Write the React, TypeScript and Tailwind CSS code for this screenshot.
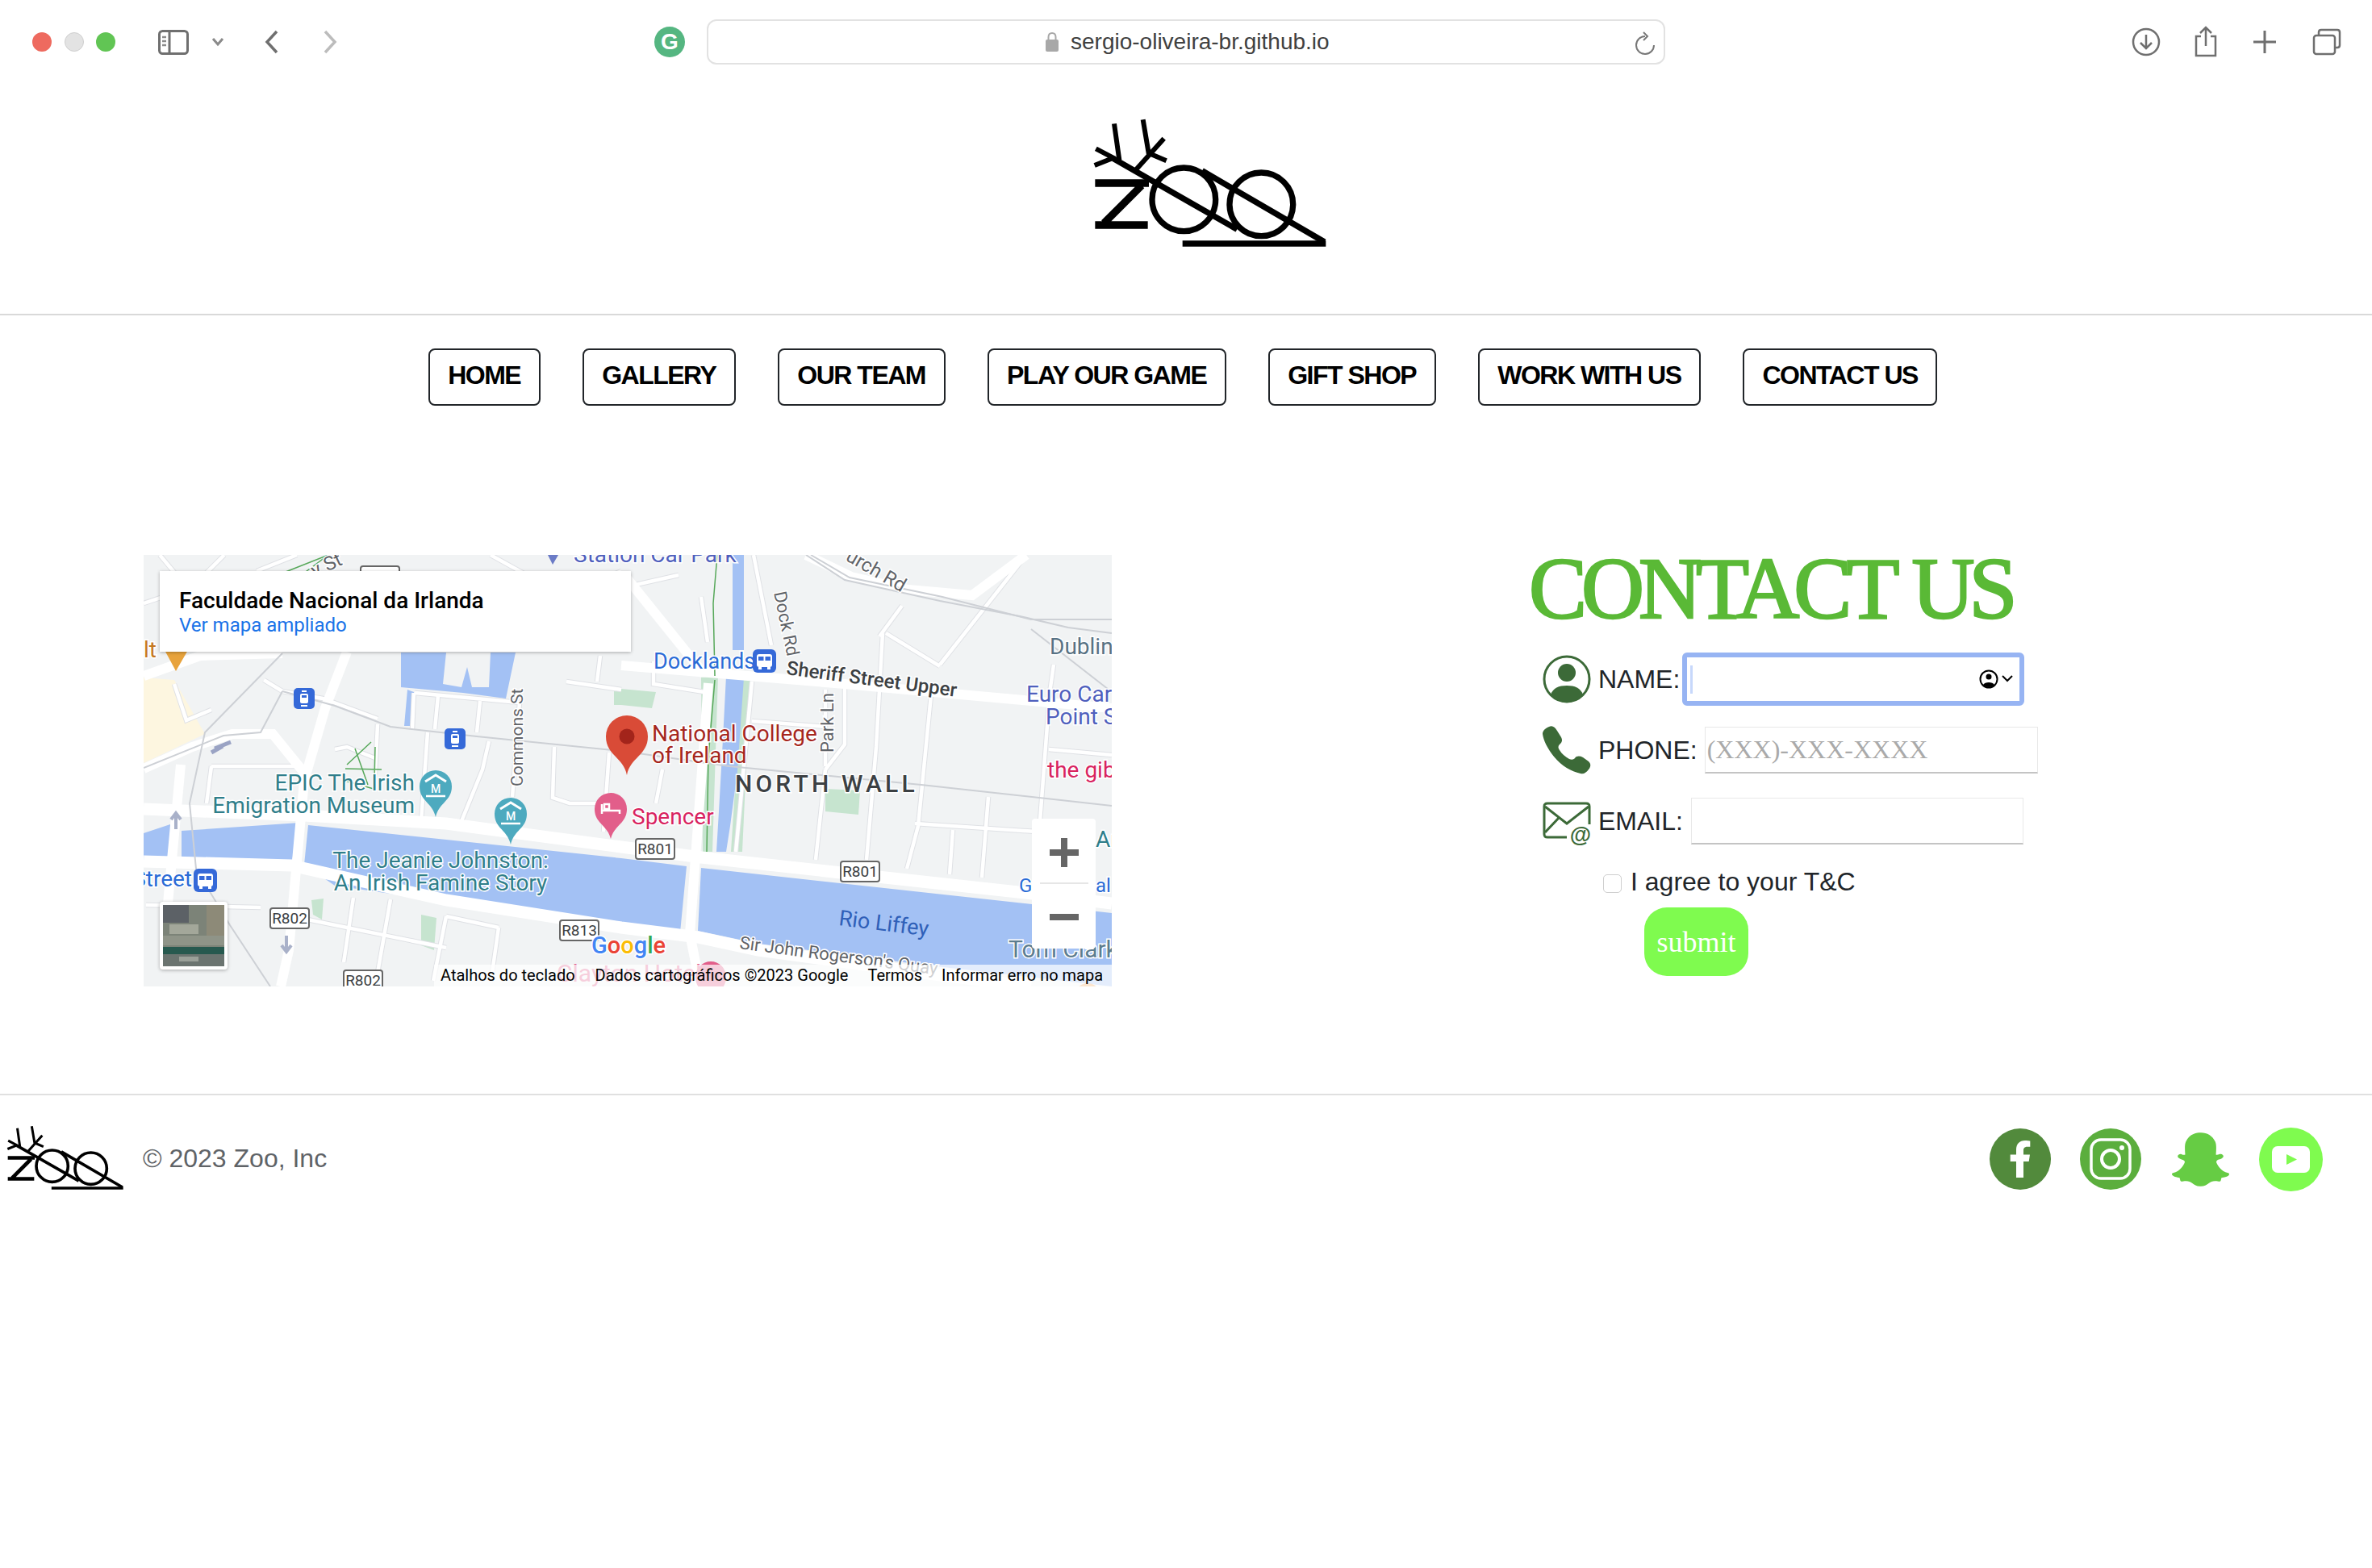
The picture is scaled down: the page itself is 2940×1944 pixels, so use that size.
import { FaFacebookF, FaSnapchatGhost } from 'react-icons/fa'

const NAV = ['HOME', 'GALLERY', 'OUR TEAM', 'PLAY OUR GAME', 'GIFT SHOP', 'WORK WITH US', 'CONTACT US']

// map geometry, in pixels of the 1200x535 map
const WATER = [
  '0,345 33,334 33,378 0,378',
  '47,342 193,332 183,384 47,378',
  '204,335 592,376 673,386 665,468 592,460 375,430 237,410 199,384',
  '691,388 1200,444 1200,535 965,508 762,482 687,466',
  '319,121 375,121 371,160 394,164 401,139 407,164 428,164 430,121 461,121 449,178 396,171 319,164',
  '327,167 335,170 331,212 323,212',
  '730,0 744,0 744,118 730,118',
  '722,150 744,152 736,268 727,336 722,368 710,368 713,318 718,228',
]

const GREEN = [
  '691,152 712,150 705,368 693,368',
  '742,152 752,154 742,368 728,368',
  '592,166 635,170 630,190 592,186',
  '845,290 888,292 886,322 845,318',
  '208,428 223,426 221,452 210,446',
  '344,446 363,450 360,490 344,484',
  '583,168 592,168 592,186 583,186',
]

const MAJOR: number[][][] = [
  [[0, 315], [199, 323], [375, 333], [592, 362], [691, 375], [1102, 420], [1200, 432]],
  [[0, 380], [183, 385], [375, 428], [592, 462], [687, 474], [762, 490], [965, 518], [1100, 535]],
  [[46, 260], [30, 432]],
  [[252, 120], [225, 190], [199, 280], [180, 490], [170, 535]],
  [[700, 159], [677, 470], [690, 535]],
  [[600, 30], [695, 148]],
  [[592, 137], [869, 160], [1200, 190]],
  [[0, 265], [60, 238], [110, 222], [160, 222], [199, 270]],
  [[0, 150], [70, 125], [172, 122]],
  [[821, 0], [877, 27], [948, 43], [1027, 50], [1094, 0]],
]

const MINOR: number[][][] = [
  [[38, 160], [53, 205], [84, 192]],
  [[149, 155], [172, 169], [222, 178], [290, 203]],
  [[336, 171], [466, 183]],
  [[335, 171], [333, 216]],
  [[365, 174], [361, 216]],
  [[417, 181], [413, 220]],
  [[466, 183], [457, 300]],
  [[352, 220], [344, 330]],
  [[428, 231], [420, 266], [394, 330]],
  [[290, 210], [287, 272]],
  [[237, 241], [252, 238], [287, 252]],
  [[84, 262], [187, 262]],
  [[84, 262], [78, 308]],
  [[524, 157], [592, 167]],
  [[566, 125], [562, 157]],
  [[509, 238], [507, 301], [528, 308], [566, 308]],
  [[577, 245], [570, 343]],
  [[260, 425], [248, 505]],
  [[306, 427], [290, 518]],
  [[375, 448], [359, 528]],
  [[440, 462], [432, 518]],
  [[203, 452], [375, 487]],
  [[375, 448], [440, 462]],
  [[3, 434], [145, 437]],
  [[916, 97], [908, 238], [896, 378]],
  [[920, 97], [987, 138]],
  [[987, 136], [1094, 0]],
  [[976, 174], [960, 336], [946, 389]],
  [[845, 266], [833, 378]],
  [[845, 167], [845, 262]],
  [[869, 160], [869, 235], [845, 266]],
  [[754, 157], [734, 368]],
  [[754, 206], [845, 213]],
  [[956, 333], [1106, 343]],
  [[1047, 300], [1039, 400]],
  [[1003, 341], [999, 396]],
  [[1122, 185], [1110, 343]],
  [[1122, 241], [1200, 248]],
  [[1128, 136], [1122, 178]],
  [[632, 132], [632, 160], [695, 170]],
  [[643, 266], [635, 308]],
  [[756, 0], [778, 112]],
  [[940, 63], [912, 101]],
  [[592, 41], [663, 25]],
  [[691, 52], [699, 108]],
  [[0, 60], [60, 40], [100, 0]],
  [[20, 0], [70, 60]],
  [[140, 20], [190, 0]],
  [[430, 0], [520, 50], [592, 20]],
]

const RAILS: number[][][] = [
  [[0, 264], [99, 224], [145, 220], [172, 169]],
  [[172, 169], [237, 187], [306, 213], [413, 225], [592, 243], [726, 262], [964, 285], [1200, 311]],
  [[172, 122], [76, 220], [57, 308], [65, 389], [107, 459], [157, 535]],
  [[821, 0], [869, 31], [987, 57], [1086, 76], [1146, 90], [1200, 97]],
  [[827, 0], [875, 28], [990, 52], [1100, 80], [1200, 80]],
  [[1100, 92], [1200, 170]],
]

const pts = (line: number[][]) => line.map(p => p.join(',')).join(' ')

function Logo({ className }: { className: string }) {
  return (
    <svg className={className} viewBox="0 0 1080 570" fill="none" stroke="#000">
      <g strokeWidth="18">
        <path d="M243 70 262 205M350 55 372 185M428 125 325 240M175 163 245 200M170 225 240 197M372 180 437 208" />
      </g>
      <g strokeWidth="28">
        <path d="M172 291H372M345 300 205 440M172 447H368" />
      </g>
      <g strokeWidth="22">
        <path d="M240 200 700 463M570 245 1025 510" />
        <circle cx="502" cy="352" r="118" />
        <circle cx="790" cy="370" r="118" />
        <path d="M497 516H1030" />
      </g>
    </svg>
  )
}

function Label({ x, y, size = 28, color, anchor, rotate, weight = 400, spacing, children }: any) {
  return (
    <text
      x={x}
      y={y}
      fontSize={size}
      fontWeight={weight}
      fill={color}
      textAnchor={anchor}
      letterSpacing={spacing}
      stroke="#fff"
      strokeWidth="3"
      paintOrder="stroke"
      transform={rotate ? `rotate(${rotate} ${x} ${y})` : undefined}
    >
      {children}
    </text>
  )
}

function Pin({ cx, top, w, h, color }: any) {
  const r = w / 2
  const cy = top + r
  return (
    <path
      fill={color}
      d={`M${cx - r} ${cy}A${r} ${r} 0 1 1 ${cx + r} ${cy}C${cx + r} ${cy + r * 0.9} ${cx + 4} ${cy + r} ${cx} ${top + h}C${cx - 4} ${cy + r} ${cx - r} ${cy + r * 0.9} ${cx - r} ${cy}Z`}
    />
  )
}

function Museum({ cx, top }: any) {
  return (
    <g>
      <Pin cx={cx} top={top} w={40} h={58} color="#4daabf" />
      <path d={`M${cx - 13} ${top + 14}L${cx} ${top + 6}L${cx + 13} ${top + 14}`} fill="none" stroke="#fff" strokeWidth="3" />
      <text x={cx} y={top + 28} fontSize="14" fontWeight="500" fill="#fff" textAnchor="middle">M</text>
      <path d={`M${cx - 12} ${top + 32}H${cx + 12}`} stroke="#fff" strokeWidth="2.5" />
    </g>
  )
}

function Tram({ x, y }: any) {
  return (
    <g>
      <rect x={x} y={y} width="26" height="26" rx="5" fill="#3569d8" />
      <rect x={x + 8} y={y + 7} width="10" height="12" rx="2" fill="#fff" />
      <rect x={x + 10} y={y + 9} width="6" height="3" fill="#3569d8" />
      <path d={`M${x + 10} ${y + 4}H${x + 16}M${x + 9} ${y + 22}H${x + 17}`} stroke="#fff" strokeWidth="2" />
    </g>
  )
}

function Bus({ x, y }: any) {
  return (
    <g>
      <rect x={x} y={y} width="29" height="29" rx="6" fill="#3569d8" />
      <rect x={x + 5} y={y + 6} width="19" height="16" rx="3" fill="#fff" />
      <rect x={x + 7} y={y + 9} width="6.5" height="5" fill="#3569d8" />
      <rect x={x + 15.5} y={y + 9} width="6.5" height="5" fill="#3569d8" />
      <rect x={x + 7} y={y + 22} width="4" height="3" fill="#fff" />
      <rect x={x + 18} y={y + 22} width="4" height="3" fill="#fff" />
    </g>
  )
}

function Shield({ x, y, w = 48, h = 25, children }: any) {
  return (
    <g>
      <rect x={x} y={y} width={w} height={h} rx="3" fill="#fff" stroke="#666" strokeWidth="2" />
      <text x={x + w / 2} y={y + h - 6} fontSize="19" fill="#3c4043" textAnchor="middle">{children}</text>
    </g>
  )
}

function MapCanvas() {
  return (
    <svg className="block w-[1200px] h-[535px] font-['Roboto',sans-serif]" viewBox="0 0 1200 535">
      <rect width="1200" height="535" fill="#f1f3f4" />
      <polygon points="0,152 38,155 76,222 0,258" fill="#fdf6e0" />
      {GREEN.map(p => <polygon key={p} points={p} fill="#c6e4cf" />)}
      {WATER.map(p => <polygon key={p} points={p} fill="#a3c1f4" />)}
      {MINOR.map((l, i) => <polyline key={i} points={pts(l)} fill="none" stroke="#dfe1e5" strokeWidth="6.5" />)}
      {MINOR.map((l, i) => <polyline key={i} points={pts(l)} fill="none" stroke="#fff" strokeWidth="4.5" />)}
      {MAJOR.map((l, i) => <polyline key={i} points={pts(l)} fill="none" stroke="#fff" strokeWidth={i < 2 ? 15 : 12} />)}
      {RAILS.map((l, i) => <polyline key={i} points={pts(l)} fill="none" stroke="#cdd0d5" strokeWidth="2" />)}
      <path d="M229 0 171 23 190 29Z" fill="none" stroke="#57a85a" strokeWidth="1.5" />
      <path d="M711 0 706 60 708 150M708 155 700 250 698 368M252 260 282 232M250 265 295 266M262 240 278 285M287 238 286 282M250 280 285 290" fill="none" stroke="#57a85a" strokeWidth="1.5" />

      <path d="M501 0H514L507 12Z" fill="#6b7bc6" />
      <Label x={533} y={9} size={28} color="#4f5fbd">Station Car Park</Label>
      <Label x={212} y={28} size={24} color="#5f6368" rotate={-25}>y St</Label>
      <Label x={869} y={6} size={24} color="#5f6368" rotate={30}>urch Rd</Label>
      <Shield x={269} y={14}>R1</Shield>

      <Label x={0} y={127} color="#c5781f">lt</Label>
      <path d="M26 118H55L40 144Z" fill="#e8a33c" />
      <Tram x={186} y={165} />
      <Tram x={373} y={215} />
      <path d="M88 240 108 232M84 245 98 237" stroke="#9aa3c4" strokeWidth="5" />
      <path d="M40 340V322M34 328 40 320 46 328" fill="none" stroke="#a9b1c9" strokeWidth="4" />
      <path d="M177 490V472M171 484 177 492 183 484" fill="none" stroke="#a9b1c9" strokeWidth="4" />

      <Label x={336} y={292} color="#2f7e8a" anchor="end">EPIC The Irish</Label>
      <Label x={336} y={320} color="#2f7e8a" anchor="end">Emigration Museum</Label>
      <Museum cx={362} top={267} />
      <Museum cx={455} top={301} />
      <Label x={470} y={287} size={21} color="#5f6368" rotate={-90}>Commons St</Label>
      <Label x={368} y={388} color="#2f7e8a" anchor="middle">The Jeanie Johnston:</Label>
      <Label x={368} y={416} color="#2f7e8a" anchor="middle">An Irish Famine Story</Label>
      <Label x={60} y={411} color="#2a6bd6" anchor="end">Street</Label>
      <Bus x={62} y={389} />
      <Shield x={157} y={438}>R802</Shield>
      <Shield x={516} y={453}>R813</Shield>
      <Shield x={248} y={515}>R802</Shield>
      <Shield x={610} y={352}>R801</Shield>
      <Shield x={864} y={380}>R801</Shield>

      <Label x={632} y={141} size={27} color="#2a6bd6">Docklands</Label>
      <Bus x={755} y={117} />
      <Label x={796} y={148} size={24} weight={500} color="#3c4043" rotate={7.5}>Sheriff Street Upper</Label>
      <Label x={781} y={47} size={22} color="#5f6368" rotate={78}>Dock Rd</Label>
      <Label x={855} y={245} size={22} color="#5f6368" rotate={-90}>Park Ln</Label>
      <Label x={1123} y={123} color="#587284">Dublin</Label>
      <Label x={1094} y={182} color="#4f5fbd">Euro Car</Label>
      <Label x={1118} y={210} color="#4f5fbd">Point S</Label>
      <Label x={1120} y={276} color="#d8235f">the gib</Label>
      <Label x={1180} y={362} color="#2f7e8a">Ar</Label>
      <Label x={1085} y={418} size={24} color="#2a6bd6">G</Label>
      <Label x={1180} y={418} size={24} color="#2a6bd6">al</Label>

      <Pin cx={599} top={199} w={52} h={74} color="#d94b37" />
      <circle cx="599" cy="225" r="9.5" fill="#a3241b" />
      <Label x={630} y={231} color="#a5261d">National College</Label>
      <Label x={630} y={258} color="#a5261d">of Ireland</Label>
      <Label x={733} y={294} size={30} weight={500} spacing={4.2} color="#3c4043">NORTH WALL</Label>

      <Pin cx={579} top={295} w={40} h={57} color="#e25e8a" />
      <path d="M568 309V321M568 317H590V321M571 309H577V315H571Z" fill="none" stroke="#fff" strokeWidth="2.5" />
      <Label x={605} y={334} color="#d8235f">Spencer</Label>

      <text x={861} y={459} fontSize="27" fill="#2f5fb8" transform="rotate(7 861 459)">Rio Liffey</text>
      <Label x={738} y={488} size={22} color="#5f6368" rotate={7.5}>Sir John Rogerson's Quay</Label>
      <Label x={1072} y={499} size={30} color="#5d7d8f">Tom Clark</Label>

      <text x={555} y={494} fontSize="29" fontWeight="500" stroke="#fff" strokeWidth="3" paintOrder="stroke">
        <tspan fill="#4285f4">G</tspan><tspan fill="#ea4335">o</tspan><tspan fill="#fbbc05">o</tspan><tspan fill="#4285f4">g</tspan><tspan fill="#34a853">l</tspan><tspan fill="#ea4335">e</tspan>
      </text>
      <text x={512} y={529} fontSize="30" fill="#e05b8a">Clayton Hotel</text>
      <Pin cx={703} top={504} w={38} h={56} color="#e25e8a" />
      <circle cx="1170" cy="547" r="16" fill="#f0a860" />
    </svg>
  )
}

function Thumbnail() {
  return (
    <svg className="block w-[76px] h-[76px]" viewBox="0 0 76 76">
      <rect width="76" height="76" fill="#7c8378" />
      <rect width="32" height="22" fill="#5c6166" />
      <rect x="54" width="22" height="50" fill="#8d8a78" />
      <rect x="8" y="24" width="36" height="12" fill="#a3a79a" />
      <rect y="38" width="76" height="12" fill="#8f9488" />
      <rect y="52" width="76" height="9" fill="#27594f" />
      <rect y="61" width="76" height="15" fill="#6b7470" />
      <rect x="20" y="64" width="24" height="6" fill="#9aa099" />
    </svg>
  )
}

function GoogleMap() {
  return (
    <div className="relative w-[1200px] h-[535px] overflow-hidden shrink-0">
      <MapCanvas />
      <div className="absolute left-[20px] top-[20px] w-[584px] h-[100px] bg-white shadow-[0_1px_4px_rgba(0,0,0,0.3)] pl-[24px] pt-[19px] font-['Roboto',sans-serif]">
        <div className="text-[28px] leading-[36px] font-medium text-black">Faculdade Nacional da Irlanda</div>
        <div className="text-[24px] leading-[24px] text-[#1a73e8]">Ver mapa ampliado</div>
      </div>
      <div className="absolute left-[20px] top-[430px] p-[4px] bg-white rounded-[4px] shadow-[0_1px_4px_rgba(0,0,0,0.3)]">
        <Thumbnail />
      </div>
      <div className="absolute left-[1101px] top-[327px] w-[79px] h-[161px] bg-white rounded-[4px] flex flex-col items-center">
        <svg className="mt-[24px] w-[36px] h-[36px]" viewBox="0 0 36 36"><path d="M18 0V36M0 18H36" stroke="#666" strokeWidth="8" /></svg>
        <div className="mt-[19px] w-[60px] h-[2px] bg-[#e6e6e6]" />
        <svg className="mt-[37px] w-[36px] h-[8px]" viewBox="0 0 36 8"><path d="M0 4H36" stroke="#666" strokeWidth="8" /></svg>
      </div>
      <div className="absolute left-[360px] right-0 top-[508px] h-[27px] pb-[2px] bg-white/70 flex items-center text-[20px] text-black whitespace-nowrap font-['Roboto',sans-serif]">
        <span className="ml-[8px]">Atalhos do teclado</span>
        <span className="ml-[25px]">Dados cartográficos ©2023 Google</span>
        <span className="ml-[24px]">Termos</span>
        <span className="ml-[24px]">Informar erro no mapa</span>
      </div>
    </div>
  )
}

function UserIcon() {
  return (
    <svg className="w-[60px] h-[60px] shrink-0" viewBox="0 0 60 60">
      <circle cx="30" cy="30" r="28" fill="none" stroke="#3c6a38" strokeWidth="3" />
      <circle cx="30" cy="22" r="11" fill="#3c6a38" />
      <path d="M10 49C13 41 20 38 30 38S47 41 50 49C45 55 38 59 30 59S15 55 10 49Z" fill="#3c6a38" />
    </svg>
  )
}

function PhoneIcon() {
  return (
    <svg className="w-[60px] h-[60px] shrink-0" viewBox="0 0 60 60">
      <path fill="#3c6a38" d="M8 1C12-1 15 1 18 6L23 14C25 18 24 20 21 23C19 25 19 27 21 30C24 35 28 38 33 41C36 42 38 42 40 40C42 37 46 37 50 39L57 44C60 47 60 50 57 54C54 58 51 60 47 59C35 56 24 50 14 38C6 28 1 18 0 10C0 6 3 3 8 1Z" />
    </svg>
  )
}

function MailIcon() {
  return (
    <svg className="w-[60px] h-[54px] shrink-0 mt-[6px]" viewBox="0 0 60 54">
      <path d="M30 44H6C3 44 2 43 2 40V6C2 3 3 2 6 2H54C57 2 58 3 58 6V28" fill="none" stroke="#3c6a38" strokeWidth="3" />
      <path d="M3 6 30 27 57 6M3 38 20 20" fill="none" stroke="#3c6a38" strokeWidth="3" />
      <circle cx="47" cy="41" r="13" fill="#fff" />
      <text x="47" y="50" fontSize="27" fontWeight="700" fill="#3c6a38" textAnchor="middle" className="font-['Liberation_Sans',sans-serif]">@</text>
    </svg>
  )
}

function ContactForm() {
  return (
    <div className="ml-[518px] w-[640px] text-[32px] text-[#212529]">
      <h1 className="h-[121px] -ml-[1px] text-[108px] leading-[84px] font-normal text-[#5ab936] tracking-[-7px] [word-spacing:4px] [-webkit-text-stroke:2.5px_#5ab936] whitespace-nowrap font-['Liberation_Serif',serif]">CONTACT US</h1>
      <div className="flex items-center h-[66px] pl-[16px]">
        <UserIcon />
        <label className="ml-[9px]">NAME:</label>
        <div className="relative ml-[3px]">
          <input className="block w-[424px] h-[66px] border-[6px] border-[#97b4f3] rounded-[6px] outline-none bg-white" />
          <div className="absolute left-[10px] top-[16px] w-[3px] h-[35px] bg-[#c7d8fb]" />
          <svg className="absolute right-[12px] top-[21px] w-[44px] h-[24px]" viewBox="0 0 44 24">
            <circle cx="12" cy="12" r="10.5" fill="#fff" stroke="#000" strokeWidth="2" />
            <circle cx="12" cy="9" r="3.5" />
            <path d="M5 19C7 15 17 15 19 19C16 23 8 23 5 19Z" />
            <path d="M29 8 35 14 41 8" fill="none" stroke="#000" strokeWidth="2" />
          </svg>
        </div>
      </div>
      <div className="flex items-center h-[58px] mt-[26px] pl-[16px]">
        <PhoneIcon />
        <label className="ml-[9px]">PHONE:</label>
        <input placeholder="(XXX)-XXX-XXXX" className="ml-[9px] w-[413px] h-[58px] px-[2px] border border-[#e8e8e8] border-b-[2px] border-b-[#c4c4c4] outline-none font-['Liberation_Serif',serif] placeholder:text-[#aaaaaa]" />
      </div>
      <div className="flex items-center h-[58px] mt-[30px] pl-[16px]">
        <MailIcon />
        <label className="ml-[9px]">EMAIL:</label>
        <input className="ml-[10px] w-[412px] h-[58px] border border-[#e8e8e8] border-b-[2px] border-b-[#c4c4c4] outline-none" />
      </div>
      <div className="flex items-center h-[36px] mt-[29px] pl-[91px]">
        <input type="checkbox" className="appearance-none w-[23px] h-[23px] mt-[2px] border border-[#cfcfcf] rounded-[5px] bg-white" />
        <label className="ml-[11px] -mt-[3px]">I agree to your T&amp;C</label>
      </div>
      <button className="block ml-[142px] mt-[13px] w-[129px] h-[85px] rounded-[28px] bg-[#7ffb4f] text-white text-[36px] font-['Liberation_Serif',serif]">submit</button>
    </div>
  )
}

function Social() {
  return (
    <div className="flex items-center mr-[61px]">
      <div className="w-[76px] h-[76px] rounded-full bg-[#528a3c] flex items-center justify-center">
        <FaFacebookF className="w-[46px] h-[46px] text-white" />
      </div>
      <svg className="ml-[36px] w-[76px] h-[76px]" viewBox="0 0 76 76">
        <circle cx="38" cy="38" r="38" fill="#5bae3d" />
        <rect x="14" y="14" width="48" height="48" rx="12" fill="none" stroke="#fff" strokeWidth="3.5" />
        <circle cx="38" cy="38" r="11" fill="none" stroke="#fff" strokeWidth="4" />
        <circle cx="52" cy="24" r="3" fill="#fff" />
      </svg>
      <FaSnapchatGhost className="ml-[38px] w-[71px] h-[71px] text-[#66cc44]" />
      <svg className="ml-[37px] w-[79px] h-[79px]" viewBox="0 0 79 79">
        <circle cx="39.5" cy="39.5" r="39.5" fill="#7ffb4f" />
        <rect x="16" y="23" width="47" height="33" rx="7" fill="#fff" />
        <path d="M34 33 47 39.5 34 46Z" fill="#7ffb4f" />
      </svg>
    </div>
  )
}

function BrowserBar() {
  return (
    <div className="flex items-center h-[100px] pt-[4px] pl-[40px] font-['Liberation_Sans',sans-serif]">
      <div className="w-[24px] h-[24px] rounded-full bg-[#ee6a5f]" />
      <div className="ml-[16px] w-[24px] h-[24px] rounded-full bg-[#e3e3e3] border border-[#cfcfcf]" />
      <div className="ml-[15px] w-[24px] h-[24px] rounded-full bg-[#61c554]" />
      <svg className="ml-[53px] w-[38px] h-[31px]" viewBox="0 0 38 31" fill="none" stroke="#6f6f6f" strokeWidth="3">
        <rect x="1.5" y="1.5" width="35" height="28" rx="4" />
        <path d="M14 2V29" />
        <path d="M5 9H10M5 14H10M5 19H10" strokeWidth="2.5" stroke="#8a8a8a" />
      </svg>
      <svg className="ml-[27px] w-[18px] h-[12px]" viewBox="0 0 18 12" fill="none" stroke="#8a8a8a" strokeWidth="3"><path d="M3 2 9 9 15 2" /></svg>
      <svg className="ml-[49px] w-[18px] h-[30px]" viewBox="0 0 18 30" fill="none" stroke="#6f6f6f" strokeWidth="3.5"><path d="M15 2 3 15 15 28" /></svg>
      <svg className="ml-[54px] w-[18px] h-[30px]" viewBox="0 0 18 30" fill="none" stroke="#bcbcbc" strokeWidth="3.5"><path d="M3 2 15 15 3 28" /></svg>
      <div className="ml-[393px] w-[38px] h-[38px] rounded-full bg-[#55b681] flex items-center justify-center text-white text-[28px] font-bold">G</div>
      <div className="relative ml-[27px] w-[1188px] h-[56px] border-[2px] border-[#e2e2e2] rounded-[12px] flex items-center">
        <svg className="ml-[418px] w-[16px] h-[24px]" viewBox="0 0 16 24">
          <path d="M3.5 10V6C3.5 3 5 1 8 1S12.5 3 12.5 6V10" fill="none" stroke="#a8a8a8" strokeWidth="2" />
          <rect y="9" width="16" height="15" rx="2" fill="#a8a8a8" />
        </svg>
        <span className="ml-[15px] text-[28px] text-[#404040]">sergio-oliveira-br.github.io</span>
        <svg className="absolute right-[10px] top-[13px] w-[26px] h-[30px]" viewBox="0 0 26 30" fill="none" stroke="#777" strokeWidth="2">
          <path d="M13 6A11 11 0 1 0 24 17" />
          <path d="M11 1 16 6 11 11" />
        </svg>
      </div>
      <svg className="ml-[578px] w-[36px] h-[36px]" viewBox="0 0 36 36" fill="none" stroke="#6f6f6f" strokeWidth="2.5">
        <circle cx="18" cy="18" r="16" />
        <path d="M18 9V26M11 19 18 26 25 19" />
      </svg>
      <svg className="ml-[41px] w-[30px] h-[40px]" viewBox="0 0 30 40" fill="none" stroke="#6f6f6f" strokeWidth="2.5">
        <path d="M9 13H3V37H27V13H21" />
        <path d="M15 25V2M8 9 15 2 22 9" />
      </svg>
      <svg className="ml-[43px] w-[30px] h-[30px]" viewBox="0 0 30 30" fill="none" stroke="#6f6f6f" strokeWidth="3"><path d="M15 1V29M1 15H29" /></svg>
      <svg className="ml-[44px] w-[36px] h-[34px]" viewBox="0 0 36 34" fill="none" stroke="#6f6f6f" strokeWidth="2.5">
        <path d="M8 8V5C8 3 9 2 11 2H31C33 2 34 3 34 5V21C34 23 33 24 31 24H28" />
        <rect x="2" y="9" width="26" height="23" rx="3" />
      </svg>
    </div>
  )
}

export default function App() {
  return (
    <div className="w-[2940px] h-[1944px] bg-white overflow-hidden font-['Liberation_Sans',sans-serif]">
      <BrowserBar />
      <div className="h-[291px] border-b-2 border-[#d9d9d9] flex justify-center">
        <Logo className="block ml-[20px] mt-[30px] w-[360px] h-[190px]" />
      </div>
      <div className="flex justify-center gap-[52px] pt-[41px] pr-[8px]">
        {NAV.map(n => (
          <a key={n} className="h-[71px] px-[22.5px] pb-[5px] border-2 border-[#212529] rounded-[8px] flex items-center text-[32px] tracking-[-1.5px] font-bold text-black whitespace-nowrap">{n}</a>
        ))}
      </div>
      <div className="flex pl-[178px] pt-[185px] h-[853px]">
        <GoogleMap />
        <ContactForm />
      </div>
      <div className="h-[160px] border-t-2 border-[#e0e0e0] flex items-center justify-between">
        <div className="flex items-center">
          <Logo className="block shrink-0 w-[180px] h-[95px] -ml-[19px] mb-[6px]" />
          <span className="ml-[16px] mb-[2px] text-[32px] text-[#5f6367]">© 2023 Zoo, Inc</span>
        </div>
        <Social />
      </div>
    </div>
  )
}
